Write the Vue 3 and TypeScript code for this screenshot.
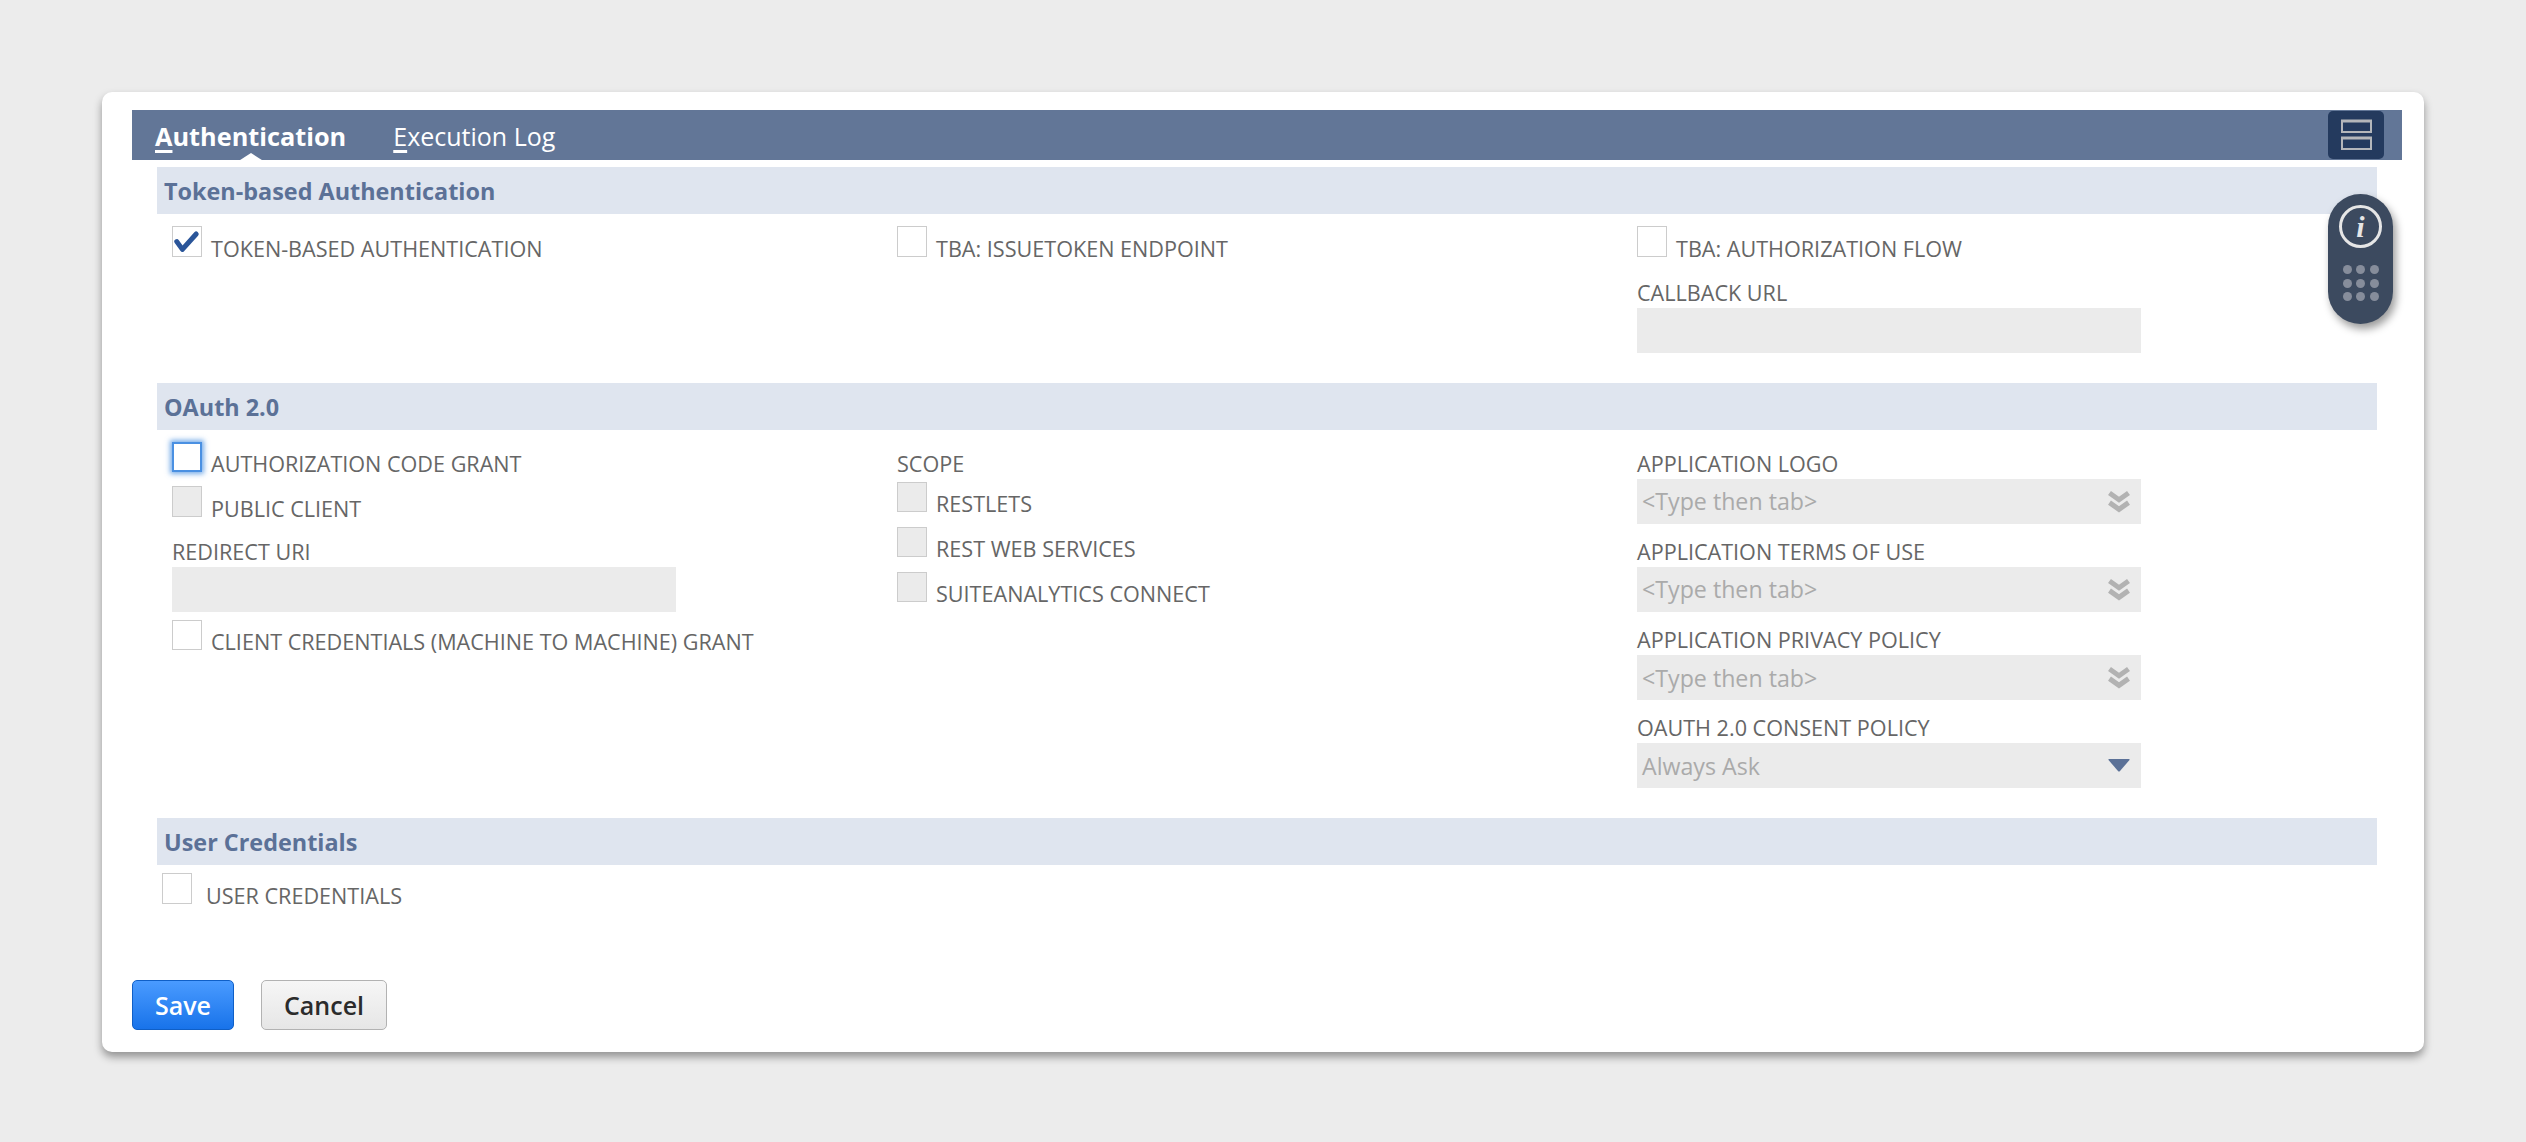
<script setup lang="ts">
const lookups: string[] = ['APPLICATION LOGO', 'APPLICATION TERMS OF USE', 'APPLICATION PRIVACY POLICY']
const scopes: string[] = ['RESTLETS', 'REST WEB SERVICES', 'SUITEANALYTICS CONNECT']
const dots: number[] = [1, 2, 3, 4, 5, 6, 7, 8, 9]
</script>

<template>
  <div class="page">
    <main class="card">
      <nav class="tabs">
        <a class="tab active"><u>A</u>uthentication</a>
        <a class="tab"><u>E</u>xecution Log</a>
        <button class="layout-btn" aria-label="Layout">
          <svg width="33" height="32" viewBox="0 0 33 32">
            <path d="M2 2h29v11H2zM2 19h29v11H2z" fill="none" stroke="#b4b6ba" stroke-width="2" />
            <path d="M1 2h31M1 19h31" stroke="#b4b6ba" stroke-width="3" />
          </svg>
        </button>
      </nav>

      <section class="section">
        <h2 class="section-title">Token-based Authentication</h2>
        <div class="grid">
          <div class="col">
            <label class="check-row">
              <span class="box">
                <svg width="28" height="28" viewBox="0 0 28 28">
                  <path d="M3.8 14.6 9.4 22.4 23.2 7" fill="none" stroke="#2a5599" stroke-width="5" stroke-linecap="round" stroke-linejoin="round" />
                </svg>
              </span>
              <span class="label">TOKEN-BASED AUTHENTICATION</span>
            </label>
          </div>
          <div class="col">
            <label class="check-row">
              <span class="box"></span>
              <span class="label">TBA: ISSUETOKEN ENDPOINT</span>
            </label>
          </div>
          <div class="col">
            <label class="check-row">
              <span class="box"></span>
              <span class="label">TBA: AUTHORIZATION FLOW</span>
            </label>
            <div class="field callback">
              <span class="label">CALLBACK URL</span>
              <div class="input"></div>
            </div>
          </div>
        </div>
      </section>

      <section class="section">
        <h2 class="section-title">OAuth 2.0</h2>
        <div class="grid">
          <div class="col">
            <label class="check-row">
              <span class="box focus"></span>
              <span class="label">AUTHORIZATION CODE GRANT</span>
            </label>
            <label class="check-row next">
              <span class="box off"></span>
              <span class="label">PUBLIC CLIENT</span>
            </label>
            <div class="field redirect">
              <span class="label">REDIRECT URI</span>
              <div class="input"></div>
            </div>
            <label class="check-row client">
              <span class="box"></span>
              <span class="label">CLIENT CREDENTIALS (MACHINE TO MACHINE) GRANT</span>
            </label>
          </div>
          <div class="col">
            <span class="label top-label">SCOPE</span>
            <div class="scopes">
              <label v-for="s in scopes" :key="s" class="check-row">
                <span class="box off"></span>
                <span class="label">{{ s }}</span>
              </label>
            </div>
          </div>
          <div class="col">
            <div class="fields">
              <div v-for="l in lookups" :key="l" class="field">
                <span class="label">{{ l }}</span>
                <div class="input">
                  <span class="value">&lt;Type then tab&gt;</span>
                  <svg class="chevrons" width="22" height="23" viewBox="0 0 22 23">
                    <path d="M1.5 3 11 9.8 20.5 3M1.5 12.6 11 19.4l9.5-6.8" fill="none" stroke="#b2b2b2" stroke-width="5" />
                  </svg>
                </div>
              </div>
              <div class="field">
                <span class="label">OAUTH 2.0 CONSENT POLICY</span>
                <div class="input">
                  <span class="value">Always Ask</span>
                  <svg class="chevrons" width="22" height="13" viewBox="0 0 22 13">
                    <path d="M1 0h20q1 0 .5 1L12 12q-1 1-2 0L.5 1Q0 0 1 0z" fill="#5b7197" />
                  </svg>
                </div>
              </div>
            </div>
          </div>
        </div>
      </section>

      <section class="section last">
        <h2 class="section-title">User Credentials</h2>
        <label class="check-row user">
          <span class="box"></span>
          <span class="label">USER CREDENTIALS</span>
        </label>
      </section>

      <footer class="actions">
        <button class="btn save">Save</button>
        <button class="btn cancel">Cancel</button>
      </footer>

      <aside class="pill">
        <div class="info"><span>i</span></div>
        <div class="dots">
          <span v-for="d in dots" :key="d" class="dot"></span>
        </div>
      </aside>
    </main>
  </div>
</template>

<style scoped>
.page {
  min-height: 1142px;
  box-sizing: border-box;
  padding: 92px 102px 0;
  background: #ececec;
  font-family: "Open Sans", "Liberation Sans", sans-serif;
}
.card {
  position: relative;
  box-sizing: border-box;
  height: 960px;
  padding: 18px 22px 22px 30px;
  background: #fff;
  border-radius: 10px;
  box-shadow: 0 5px 9px rgba(0, 0, 0, 0.38);
  display: flex;
  flex-direction: column;
}
.tabs {
  position: relative;
  height: 50px;
  flex: none;
  display: flex;
  align-items: center;
  background: #627697;
  color: #fff;
  font-size: 25px;
  line-height: 36px;
  padding: 0 0 0 23px;
  gap: 47px;
}
.tab {
  position: relative;
  top: 1px;
}
.tab.active {
  font-size: 25.3px;
  font-weight: 700;
}
.tab.active::after {
  content: "";
  position: absolute;
  left: 50%;
  bottom: -8px;
  margin-left: -14px;
  border: 14px solid transparent;
  border-top: 0;
  border-bottom: 9px solid #fff;
}
.tab u {
  text-underline-offset: 4px;
  text-decoration-thickness: 3px;
}
.layout-btn {
  position: absolute;
  top: 1px;
  right: 18px;
  width: 56px;
  height: 48px;
  padding: 0;
  border: 0;
  border-radius: 5px;
  background: #243a5e;
  display: flex;
  align-items: center;
  justify-content: center;
}
.section {
  margin: 7px 25px 0;
  flex: none;
}
.section + .section {
  margin-top: 30px;
}
.section-title {
  margin: 0;
  height: 47px;
  padding-left: 7px;
  background: #dfe5ef;
  color: #5b7197;
  font-size: 23.4px;
  font-weight: 700;
  line-height: 48px;
}
.grid {
  display: grid;
  grid-template-columns: 725px 740px 1fr;
  padding: 12px 0 0 15px;
}
.col {
  display: flex;
  flex-direction: column;
}
.label {
  color: #666;
  font-size: 21.6px;
  line-height: 30px;
  white-space: nowrap;
}
.check-row {
  display: flex;
  align-items: baseline;
  gap: 9px;
}
.box {
  flex: none;
  box-sizing: border-box;
  width: 30px;
  height: 30.5px;
  border: 1px solid #ccc;
  background: #fff;
  display: block;
}
.box svg {
  display: block;
}
.box.off {
  background: #ebebeb;
}
.box.focus {
  border: 2px solid #4a90e2;
  box-shadow: 0 0 5px 2px rgba(74, 144, 226, 0.75);
}
.check-row.next {
  margin-top: 7px;
}
.check-row.client {
  margin-top: 7.5px;
}
.field {
  display: flex;
  flex-direction: column;
}
.field.callback {
  margin-top: 14px;
}
.field.redirect {
  margin-top: 13.5px;
}
.input {
  box-sizing: border-box;
  width: 504px;
  height: 45px;
  background: #ebebeb;
  display: flex;
  align-items: center;
  justify-content: space-between;
  padding: 0 11px 0 5px;
}
.value {
  color: #aaa;
  font-size: 23.2px;
  line-height: 30px;
}
.chevrons {
  flex: none;
}
.top-label {
  margin-top: 7px;
}
.scopes {
  display: flex;
  flex-direction: column;
  gap: 7.5px;
  margin-top: 3px;
}
.fields {
  display: flex;
  flex-direction: column;
  gap: 13.33px;
  margin-top: 7px;
}
.check-row.user {
  padding: 8px 0 0 5px;
  gap: 14px;
}
.actions {
  margin-top: auto;
  display: flex;
  gap: 27px;
}
.btn {
  box-sizing: border-box;
  height: 50px;
  border-radius: 5px;
  font-family: inherit;
  font-size: 25px;
  font-weight: 600;
  padding: 0;
}
.save {
  width: 102px;
  color: #fff;
  background: linear-gradient(#4a9bff, #1873ea);
  border: 1px solid #0f5fc7;
}
.cancel {
  width: 126px;
  color: #2b2b2b;
  background: linear-gradient(#f6f6f6, #e6e6e6);
  border: 1px solid #b2b2b2;
}
.pill {
  position: absolute;
  top: 102px;
  left: 2226px;
  width: 65px;
  height: 130px;
  border-radius: 33px;
  background: #3c4a5f;
  box-shadow: 3px 5px 8px rgba(0, 0, 0, 0.4);
  display: flex;
  flex-direction: column;
  align-items: center;
  padding-top: 11px;
  box-sizing: border-box;
}
.info {
  box-sizing: border-box;
  width: 43px;
  height: 43px;
  border: 3px solid #e6e6e6;
  border-radius: 50%;
  display: flex;
  align-items: center;
  justify-content: center;
  color: #e6e6e6;
  font-family: "Liberation Serif", serif;
  font-style: italic;
  font-weight: 700;
  font-size: 30px;
  line-height: 1;
}
.dots {
  display: grid;
  grid-template-columns: repeat(3, 9px);
  gap: 4.5px;
  margin-top: 17px;
}
.dot {
  width: 9px;
  height: 9px;
  border-radius: 50%;
  background: #868d9b;
}
</style>

<style>
html,
body {
  background: #ececec;
}
</style>
